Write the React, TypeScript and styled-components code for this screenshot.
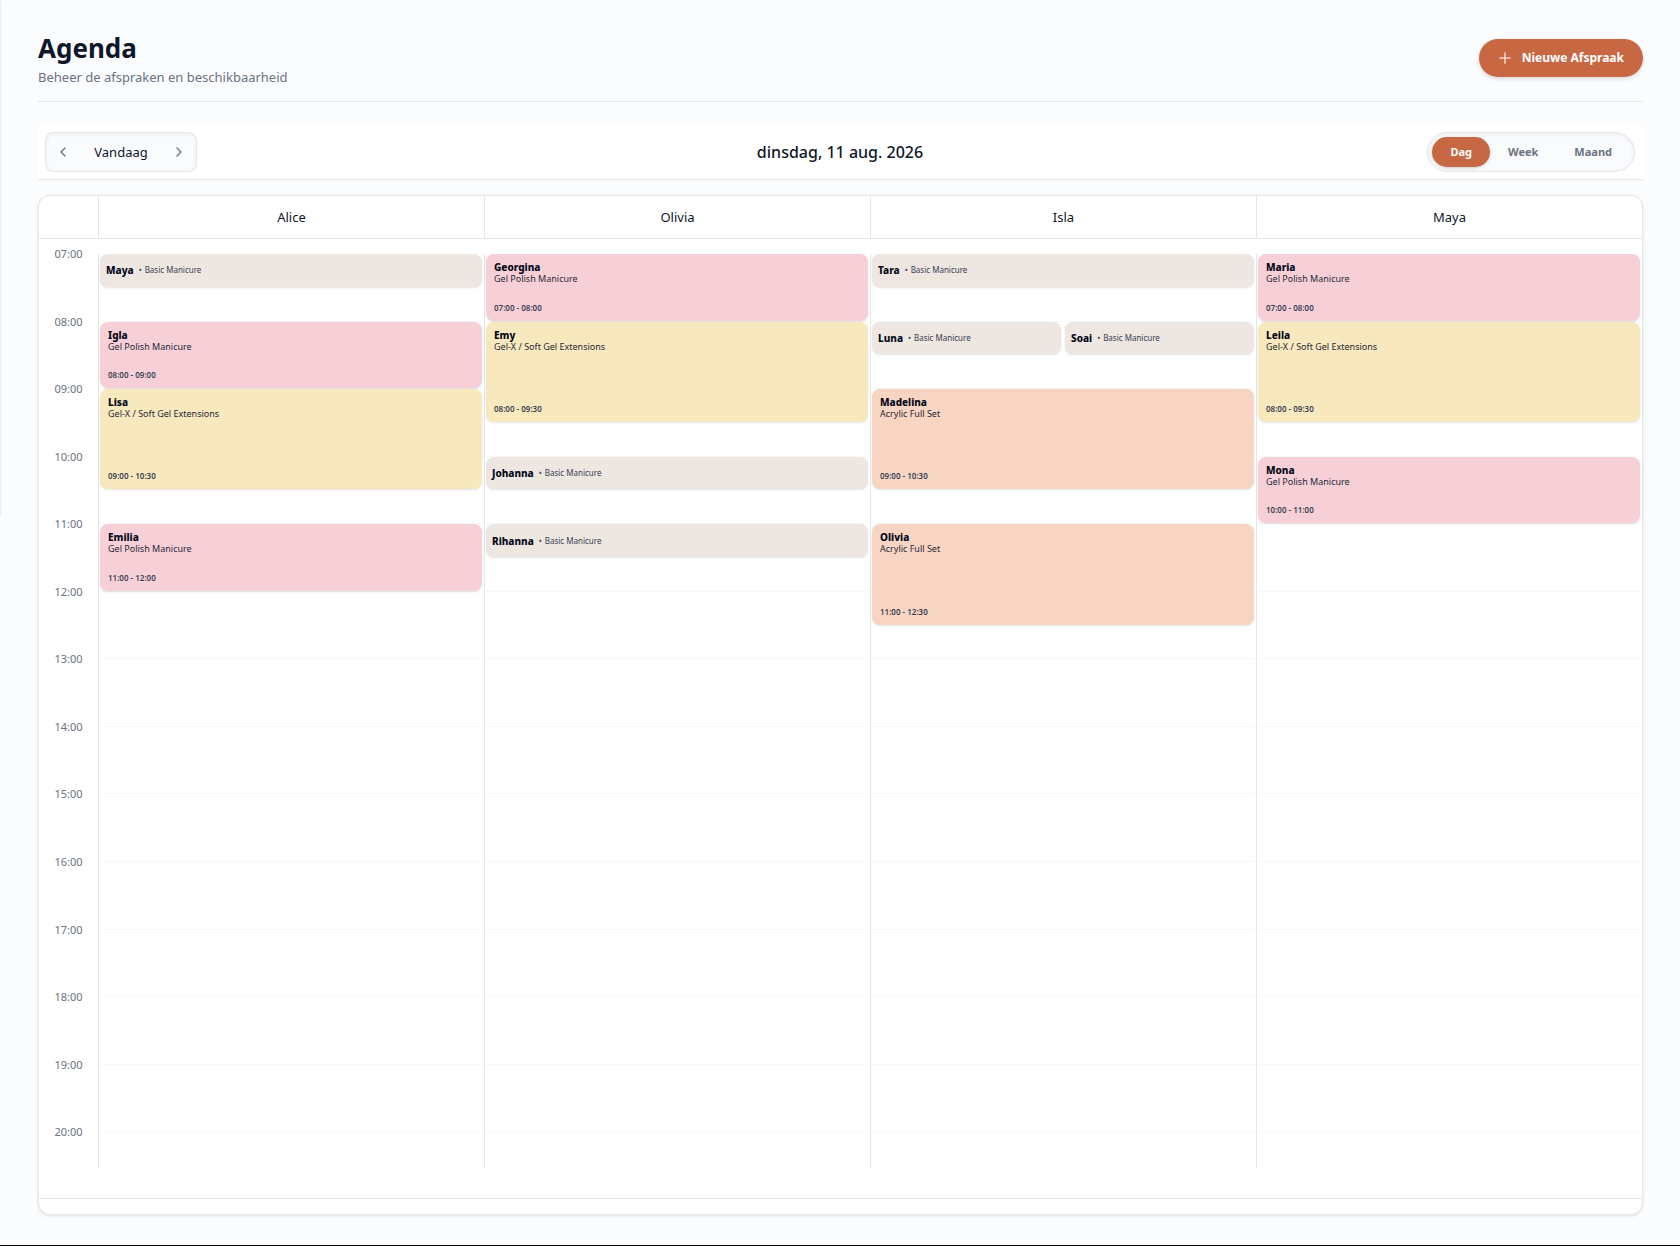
import React from "react";
import styled, { createGlobalStyle, css } from "styled-components";
import { ChevronLeft, ChevronRight, Plus } from "lucide-react";

const color = {
  page: "#fafcfd",
  surface: "#ffffff",
  line: "#e4e7ea",
  faint: "#f6f7f8",
  ink: "#0f172a",
  muted: "#6b7280",
  accent: "#c86843",
};

const GlobalStyle = createGlobalStyle`
  *, *::before, *::after { box-sizing: border-box; }
  body {
    margin: 0;
    background: ${color.page};
    color: ${color.ink};
    font-family: "Noto Sans", "Open Sans", sans-serif;
    font-size: 13px;
    line-height: 20px;
  }
  h1, h2, p { margin: 0; }
  button { font: inherit; color: inherit; border: 0; background: none; padding: 0; cursor: pointer; }
`;

const Page = styled.main`
  position: relative;
  padding: 29px 37px 30px 38px;
  border-bottom: 1px solid #000;
`;

const SidebarEdge = styled.div`
  position: absolute;
  top: 0;
  left: 0;
  width: 1px;
  height: 516px;
  background: #eceef0;
  box-shadow: 0 0 2px rgba(15, 23, 42, 0.08);
`;

const Header = styled.header`
  display: flex;
  align-items: center;
  justify-content: space-between;
  padding-bottom: 14px;
  border-bottom: 1px solid ${color.line};
`;

const Title = styled.h1`
  font-size: 26px;
  line-height: 38px;
  font-weight: 700;
`;

const Subtitle = styled.p`
  color: ${color.muted};
  line-height: 20px;
`;

const PrimaryButton = styled.button`
  display: flex;
  align-items: center;
  gap: 8px;
  height: 38px;
  padding: 0 19px 0 17px;
  border-radius: 19px;
  background: ${color.accent};
  color: #fff;
  font-size: 12px;
  font-weight: 700;
  box-shadow: 0 2px 4px rgba(15, 23, 42, 0.14);
`;

const Toolbar = styled.div`
  display: grid;
  grid-template-columns: 1fr auto 1fr;
  align-items: center;
  margin: 23px 0 15px;
  padding: 7px 8px 7px 7px;
  background: ${color.surface};
  border-bottom: 1px solid ${color.line};
`;

const inset = css`
  height: 40px;
  border: 1px solid ${color.line};
  background: #fafbfd;
  box-shadow: inset 0 1px 4px rgba(15, 23, 42, 0.07);
`;

const DateNav = styled.div`
  ${inset}
  justify-self: start;
  display: flex;
  align-items: center;
  padding: 0 3px;
  border-radius: 8px;
`;

const StepButton = styled.button`
  display: grid;
  place-items: center;
  width: 28px;
  height: 28px;
  color: ${color.muted};
`;

const TodayButton = styled.button`
  width: 88px;
  height: 28px;
  font-size: 13px;
`;

const DateTitle = styled.h2`
  font-size: 16px;
  line-height: 24px;
  font-weight: 500;
`;

const Segments = styled.div`
  ${inset}
  justify-self: end;
  display: flex;
  align-items: center;
  padding: 0 4px;
  border-radius: 20px;
`;

const Segment = styled.button<{ $active?: boolean }>`
  height: 30px;
  padding: 0 18px;
  border-radius: 15px;
  font-size: 11px;
  font-weight: 700;
  color: ${(p) => (p.$active ? "#fff" : color.muted)};
  background: ${(p) => (p.$active ? color.accent : "transparent")};
  box-shadow: ${(p) => (p.$active ? "0 1px 3px rgba(15, 23, 42, 0.2)" : "none")};
`;

const Card = styled.section`
  overflow: hidden;
  background: ${color.surface};
  border: 1px solid ${color.line};
  border-radius: 12px;
  box-shadow: 0 1px 3px rgba(15, 23, 42, 0.12);
`;

const columns = css`
  display: grid;
  grid-template-columns: 59px repeat(4, 1fr);
`;

const HeadRow = styled.div`
  ${columns}
  height: 43px;
  border-bottom: 1px solid ${color.line};
`;

const HeadCell = styled.div`
  display: grid;
  place-items: center;
  font-size: 13px;
  border-left: 1px solid ${color.line};
  &:first-child { border-left: 0; }
`;

const Body = styled.div`
  ${columns}
  padding: 15px 0 30px;
`;

const halfHours = css`
  display: grid;
  grid-template-rows: repeat(27, 1fr);
  height: 914px;
  padding-bottom: 2px;
`;

const Times = styled.div`
  ${halfHours}
`;

const Time = styled.time`
  grid-row: span 2;
  margin-top: -8px;
  text-align: center;
  font-size: 11px;
  line-height: 16px;
  color: ${color.muted};
  &:last-child { grid-row: span 1; }
`;

const Column = styled.div`
  ${halfHours}
  grid-template-columns: 1fr 1fr;
  column-gap: 4px;
  padding-left: 1px;
  padding-right: 2px;
  border-left: 1px solid ${color.line};
`;

const HourLine = styled.div<{ $row: number }>`
  grid-row: ${(p) => p.$row} / span 2;
  grid-column: 1 / -1;
  border-bottom: 1px solid ${color.faint};
`;

const tones = {
  beige: "#eee6e1",
  pink: "#f7d0d7",
  yellow: "#f8e8bd",
  peach: "#f8d4c2",
};
type Tone = keyof typeof tones;

const EventBox = styled.article<{ $row: number; $span: number; $lane?: 1 | 2; $tone: Tone }>`
  grid-row: ${(p) => p.$row} / span ${(p) => p.$span};
  grid-column: ${(p) => p.$lane ?? "1 / -1"};
  display: flex;
  flex-direction: ${(p) => (p.$span === 1 ? "row" : "column")};
  align-items: ${(p) => (p.$span === 1 ? "center" : "stretch")};
  gap: ${(p) => (p.$span === 1 ? "5px" : "0")};
  min-width: 0;
  margin-bottom: 1px;
  padding: ${(p) => (p.$span === 1 ? "0 6px" : "7px 8px")};
  border-radius: 8px;
  background: ${(p) => tones[p.$tone]};
  box-shadow: 0 1px 2px rgba(15, 23, 42, 0.12);
  line-height: 12px;
`;

const Client = styled.strong`
  font-size: 10px;
  font-weight: 800;
  color: #020617;
`;

const Service = styled.span`
  font-size: 9px;
  color: #1f2937;
`;

const CompactService = styled.span`
  display: flex;
  gap: 3px;
  font-size: 8px;
  color: #374151;
`;

const Slot = styled.time`
  margin-top: auto;
  font-size: 8px;
  font-weight: 600;
  color: #374151;
`;

const CardFooter = styled.footer`
  height: 16px;
  border-top: 1px solid ${color.line};
`;

interface Appointment {
  client: string;
  service: string;
  start: number;
  end: number;
  tone: Tone;
  lane?: 1 | 2;
}

const basic = (client: string, start: number, lane?: 1 | 2): Appointment => ({
  client, service: "Basic Manicure", start, end: start + 0.5, tone: "beige", lane,
});
const polish = (client: string, start: number): Appointment => ({
  client, service: "Gel Polish Manicure", start, end: start + 1, tone: "pink",
});
const gelx = (client: string, start: number): Appointment => ({
  client, service: "Gel-X / Soft Gel Extensions", start, end: start + 1.5, tone: "yellow",
});
const acrylic = (client: string, start: number): Appointment => ({
  client, service: "Acrylic Full Set", start, end: start + 1.5, tone: "peach",
});

const staff: { name: string; appointments: Appointment[] }[] = [
  { name: "Alice", appointments: [basic("Maya", 7), polish("Igla", 8), gelx("Lisa", 9), polish("Emilia", 11)] },
  { name: "Olivia", appointments: [polish("Georgina", 7), gelx("Emy", 8), basic("Johanna", 10), basic("Rihanna", 11)] },
  { name: "Isla", appointments: [basic("Tara", 7), basic("Luna", 8, 1), basic("Soai", 8, 2), acrylic("Madelina", 9), acrylic("Olivia", 11)] },
  { name: "Maya", appointments: [polish("Maria", 7), gelx("Leila", 8), polish("Mona", 10)] },
];

const OPENING = 7;
const hours = Array.from({ length: 14 }, (_, i) => OPENING + i);
const clock = (h: number) => `${String(Math.floor(h)).padStart(2, "0")}:${h % 1 ? "30" : "00"}`;

function Event({ item }: { item: Appointment }) {
  const span = (item.end - item.start) * 2;
  return (
    <EventBox $row={(item.start - OPENING) * 2 + 1} $span={span} $lane={item.lane} $tone={item.tone}>
      <Client>{item.client}</Client>
      {span === 1 ? (
        <CompactService><span>•</span><span>{item.service}</span></CompactService>
      ) : (
        <>
          <Service>{item.service}</Service>
          <Slot>{clock(item.start)} - {clock(item.end)}</Slot>
        </>
      )}
    </EventBox>
  );
}

export default function App() {
  return (
    <>
      <GlobalStyle />
      <Page>
        <SidebarEdge />
        <Header>
          <div>
            <Title>Agenda</Title>
            <Subtitle>Beheer de afspraken en beschikbaarheid</Subtitle>
          </div>
          <PrimaryButton type="button">
            <Plus size={18} strokeWidth={1.5} />
            Nieuwe Afspraak
          </PrimaryButton>
        </Header>
        <Toolbar>
          <DateNav>
            <StepButton type="button" aria-label="Vorige dag"><ChevronLeft size={16} /></StepButton>
            <TodayButton type="button">Vandaag</TodayButton>
            <StepButton type="button" aria-label="Volgende dag"><ChevronRight size={16} /></StepButton>
          </DateNav>
          <DateTitle>dinsdag, 11 aug. 2026</DateTitle>
          <Segments>
            <Segment type="button" $active>Dag</Segment>
            <Segment type="button">Week</Segment>
            <Segment type="button">Maand</Segment>
          </Segments>
        </Toolbar>
        <Card>
          <HeadRow>
            <HeadCell />
            {staff.map((s) => <HeadCell key={s.name}>{s.name}</HeadCell>)}
          </HeadRow>
          <Body>
            <Times>
              {hours.map((h) => <Time key={h}>{clock(h)}</Time>)}
            </Times>
            {staff.map((s) => (
              <Column key={s.name}>
                {hours.slice(0, -1).map((h, i) => <HourLine key={h} $row={i * 2 + 1} />)}
                {s.appointments.map((a) => <Event key={a.client} item={a} />)}
              </Column>
            ))}
          </Body>
          <CardFooter />
        </Card>
      </Page>
    </>
  );
}
